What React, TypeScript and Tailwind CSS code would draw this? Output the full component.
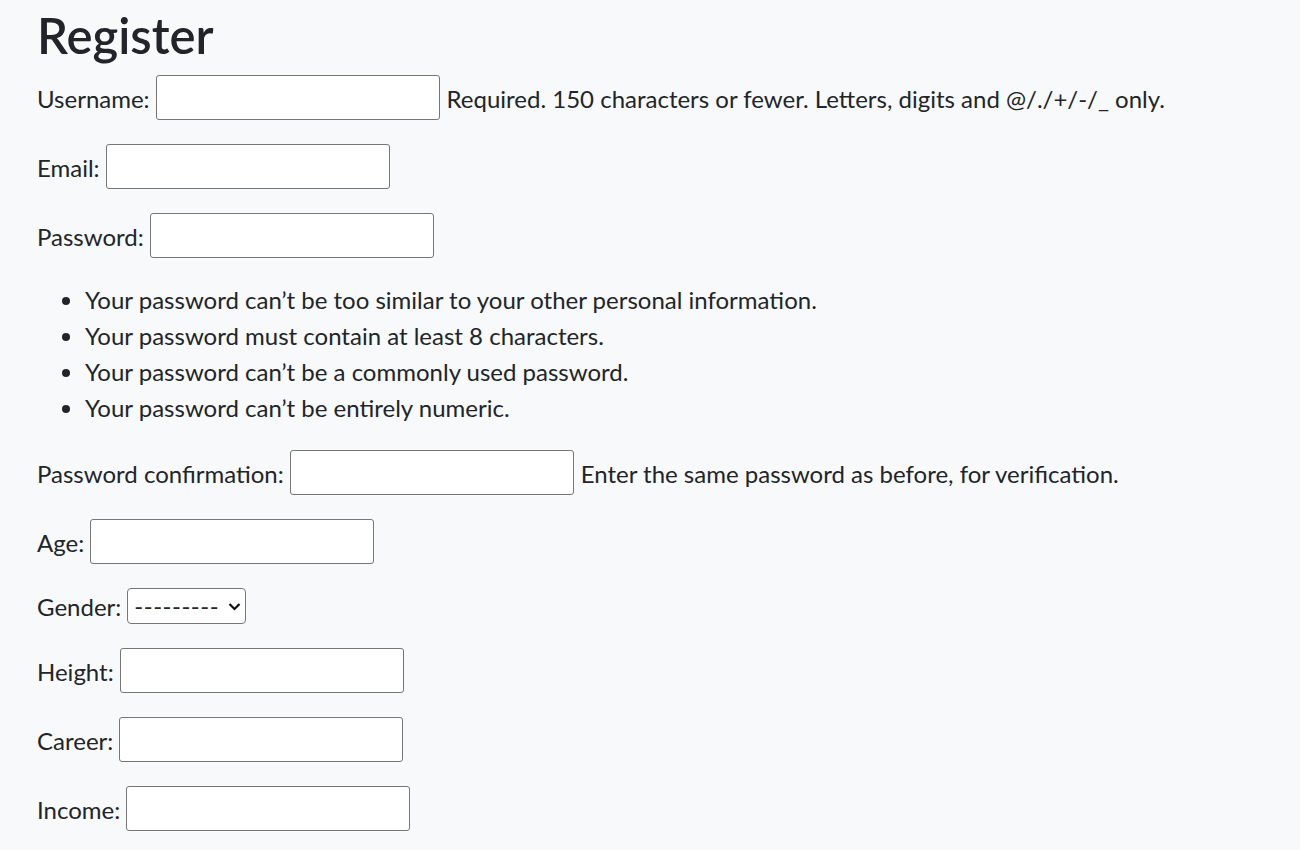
import React from "react";

function Field({ className = "w-[284px]" }: { className?: string }) {
  return (
    <input
      type="text"
      className={`h-[45px] shrink-0 rounded-[3px] border border-[#767676] bg-white outline-none ${className}`}
    />
  );
}

function Row({ label, help }: { label: string; help?: string }) {
  return (
    <div className="mb-[24px] flex h-[45px] items-center gap-[6px]">
      <label className="mt-[2px] whitespace-nowrap">{label}</label>
      <Field />
      {help && <span className="ml-[1px] mt-[2px] whitespace-nowrap">{help}</span>}
    </div>
  );
}

export default function App() {
  return (
    <div className="min-h-[850px] bg-[#f8f9fa] text-[#212529]">
      <div className="pl-[37px] font-['Lato','Noto_Sans',sans-serif] text-[24px] leading-[36px]">
        <h1 className="mb-[8px] pt-[4px] text-[49px] font-semibold leading-[63px]">Register</h1>
        <form>
          <Row
            label="Username:"
            help="Required. 150 characters or fewer. Letters, digits and @/./+/-/_ only."
          />
          <Row label="Email:" />
          <Row label="Password:" />
          <ul className="mb-[24px] list-disc pl-[48px] leading-[36px]">
            <li>Your password can’t be too similar to your other personal information.</li>
            <li>Your password must contain at least 8 characters.</li>
            <li>Your password can’t be a commonly used password.</li>
            <li>Your password can’t be entirely numeric.</li>
          </ul>
          <Row
            label="Password confirmation:"
            help="Enter the same password as before, for verification."
          />
          <Row label="Age:" />
          <div className="mb-[24px] flex h-[36px] items-center gap-[6px]">
            <label className="mt-[1px] whitespace-nowrap">Gender:</label>
            <div className="relative flex h-[36px] w-[119px] items-center rounded-[4px] border border-[#767676] bg-white pl-[6px]">
              <span className="leading-none tracking-[0.5px]">---------</span>
              <svg
                className="absolute right-[4px] top-[11px]"
                width="13"
                height="13"
                viewBox="0 0 13 13"
                fill="none"
              >
                <path d="M1.5 4 L6.5 9 L11.5 4" stroke="#111" strokeWidth="2.2" />
              </svg>
            </div>
          </div>
          <Row label="Height:" />
          <Row label="Career:" />
          <Row label="Income:" />
        </form>
      </div>
    </div>
  );
}
